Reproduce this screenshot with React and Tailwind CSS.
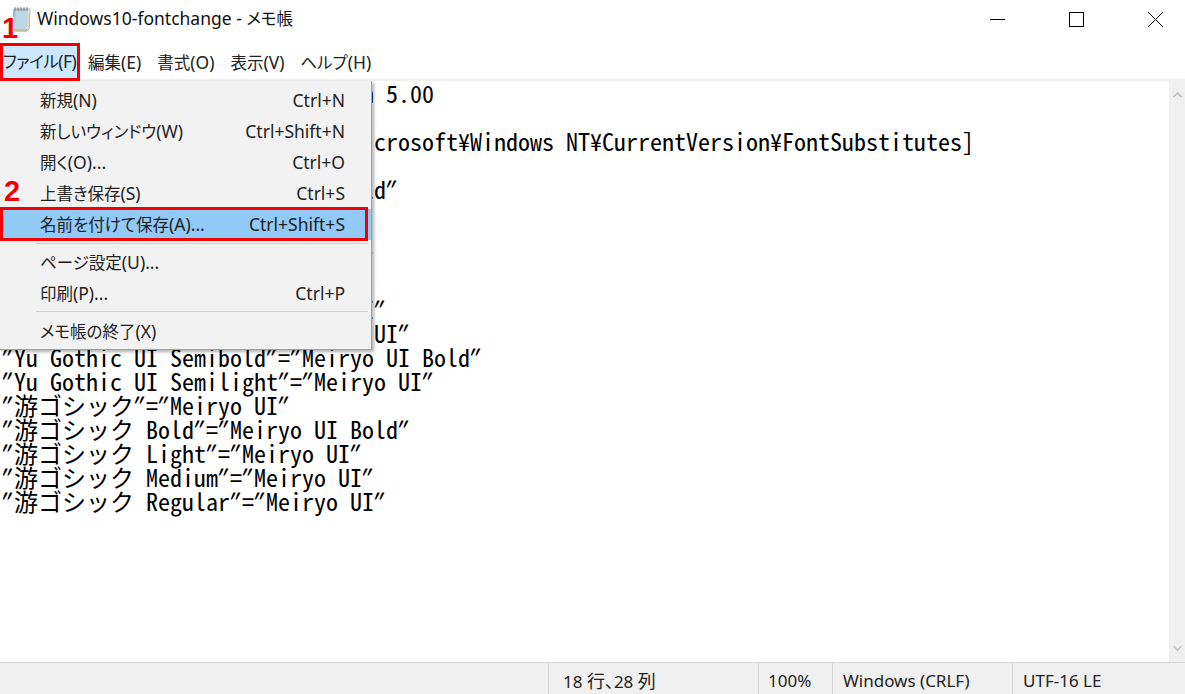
import React from 'react'

const UI_FONT = "font-['Noto_Sans','Noto_Sans_CJK_JP',sans-serif]"

const LINES = [
  'Windows Registry Editor Version 5.00',
  '',
  '[HKEY_LOCAL_MACHINE¥SOFTWARE¥Microsoft¥Windows NT¥CurrentVersion¥FontSubstitutes]',
  '',
  '"Yu Gothic Bold"="Meiryo UI Bold"',
  '"Yu Gothic Light"="Meiryo UI"',
  '"Yu Gothic Medium"="Meiryo UI"',
  '"Yu Gothic Regular"="Meiryo UI"',
  '"Yu Gothic UI"="Meiryo UI"',
  '"Yu Gothic UI Light"="Meiryo UI"',
  '"Yu Gothic UI Regular"="Meiryo UI"',
  '"Yu Gothic UI Semibold"="Meiryo UI Bold"',
  '"Yu Gothic UI Semilight"="Meiryo UI"',
  '"游ゴシック"="Meiryo UI"',
  '"游ゴシック Bold"="Meiryo UI Bold"',
  '"游ゴシック Light"="Meiryo UI"',
  '"游ゴシック Medium"="Meiryo UI"',
  '"游ゴシック Regular"="Meiryo UI"',
]

function Mixed({ text, status }) {
  const runs = text.match(/[\u3000-\u9fff]+|[^\u3000-\u9fff]+/g)
  const latin = status ? 'text-[17px]' : 'text-[17.5px]'
  const cjk = status ? "text-[18px] [font-feature-settings:'palt']" : "text-[16.5px] [font-feature-settings:'palt']"
  return (
    <span className="whitespace-pre">
      {runs.map((r, i) => (
        <span key={i} className={/[\u3000-\u9fff]/.test(r) ? cjk : latin}>{r}</span>
      ))}
    </span>
  )
}

// MS Gothic draws the straight quote slanted
function EditorLine({ text }) {
  const parts = text.split('"')
  return (
    <div className="h-[24px]">
      {parts.map((p, i) => (
        <React.Fragment key={i}>
          {i > 0 && <span className="inline-block -translate-x-[3px] -skew-x-[25deg]">"</span>}
          {p}
        </React.Fragment>
      ))}
    </div>
  )
}

function NotepadIcon() {
  return (
    <svg width="22" height="26" viewBox="0 0 22 26" className="shrink-0">
      <path d="M4 3h16l-1 20-2 2H3z" fill="#a6cbdc" stroke="#7f9aa6" strokeWidth="1" />
      <path d="M6 5h12l-1 18H5z" fill="#bcd8e4" />
      <path d="M18 3h2l-1 20-2 2z" fill="#e6dcc4" />
      <path d="M3 25h14l2-2H4z" fill="#cdbc98" />
      <path d="M5 1v4M8 1v4M11 1v4M14 1v4M17 1v4" stroke="#8a8a8a" strokeWidth="1" />
    </svg>
  )
}

function MenuItem({ label, shortcut, active }) {
  return (
    <div className={`flex h-[31px] items-center justify-between pb-[1px] pl-[40px] pr-[26px] text-[#222] ${active ? 'bg-[#91c9f7]' : ''}`}>
      <Mixed text={label} />
      {shortcut && <Mixed text={shortcut} />}
    </div>
  )
}

function FileMenu() {
  return (
    <div className="absolute left-0 top-[81px] z-10 w-[372px] border-b border-r border-[#a0a0a0] bg-[#f2f2f2] pb-[2px] pt-[4px] shadow-[2px_2px_3px_rgba(0,0,0,0.3)]">
      <MenuItem label="新規(N)" shortcut="Ctrl+N" />
      <MenuItem label="新しいウィンドウ(W)" shortcut="Ctrl+Shift+N" />
      <MenuItem label="開く(O)..." shortcut="Ctrl+O" />
      <MenuItem label="上書き保存(S)" shortcut="Ctrl+S" />
      <MenuItem label="名前を付けて保存(A)..." shortcut="Ctrl+Shift+S" active />
      <div className="mb-[3px] ml-[36px] mr-[3px] mt-[3px] h-px bg-[#d0d0d0]" />
      <MenuItem label="ページ設定(U)..." />
      <MenuItem label="印刷(P)..." shortcut="Ctrl+P" />
      <div className="mb-[4px] ml-[36px] mr-[3px] mt-[2px] h-px bg-[#d0d0d0]" />
      <MenuItem label="メモ帳の終了(X)" />
    </div>
  )
}

function StatusCell({ className, text }) {
  return (
    <div className={`flex h-full items-center border-l border-[#d7d7d7] pt-[5px] ${className}`}>
      <Mixed text={text} status />
    </div>
  )
}

export default function App() {
  return (
    <div className={`relative flex h-[694px] w-[1185px] flex-col overflow-hidden bg-white text-black ${UI_FONT}`}>
      {/* title bar */}
      <div className="flex h-[41px] items-center pb-[4px] pl-[10px]">
        <NotepadIcon />
        <span className="ml-[5px] text-[#111]"><Mixed text="Windows10-fontchange - メモ帳" /></span>
        <div className="ml-auto flex items-center">
          <svg width="16" height="16" viewBox="0 0 16 16" className="mr-[63px]">
            <path d="M1 8.5h15" stroke="#000" strokeWidth="1" />
          </svg>
          <svg width="16" height="16" viewBox="0 0 16 16" className="mr-[63px]">
            <rect x="1.5" y="1.5" width="14" height="14" fill="none" stroke="#000" strokeWidth="1" />
          </svg>
          <svg width="16" height="16" viewBox="0 0 16 16" className="mr-[22px]">
            <path d="M1 1l15 15M16 1L1 16" stroke="#000" strokeWidth="1" />
          </svg>
        </div>
      </div>

      {/* menu bar */}
      <div className="flex h-[40px] items-start border-b-2 border-[#f0f0f0] pt-[2px] text-[#222]">
        <div className="flex h-[36px] w-[80px] items-center bg-[#cce8ff] pl-[3px] tracking-[-0.5px]"><Mixed text="ファイル(F)" /></div>
        <div className="ml-[8px] flex h-[36px] items-center gap-[16px] pt-[2px]">
          <Mixed text="編集(E)" />
          <Mixed text="書式(O)" />
          <Mixed text="表示(V)" />
          <Mixed text="ヘルプ(H)" />
        </div>
      </div>

      {/* editor */}
      <div className="flex min-h-0 flex-1">
        <div className="flex-1 overflow-hidden whitespace-pre pl-[2px] font-['Noto_Sans_CJK_JP',monospace] text-[24px] leading-[24px] text-black [font-feature-settings:'hwid']">
          {LINES.map((l, i) => (
            <EditorLine key={i} text={l} />
          ))}
        </div>
        <div className="flex w-[16px] flex-col items-center justify-between bg-[#f0f0f0] py-[11px]">
          <svg width="9" height="6" viewBox="0 0 9 6"><path d="M0.5 5L4.5 1l4 4" fill="none" stroke="#c0b8b4" strokeWidth="1.5" /></svg>
          <svg width="9" height="6" viewBox="0 0 9 6"><path d="M0.5 1l4 4 4-4" fill="none" stroke="#c0c0c0" strokeWidth="1.5" /></svg>
        </div>
      </div>

      {/* status bar */}
      <div className="flex h-[32px] items-center border-t border-[#d7d7d7] bg-[#f0f0f0] text-[#222]">
        <div className="h-full w-[548px]" />
        <StatusCell className="w-[210px] pl-[14px]" text="18 行、28 列" />
        <StatusCell className="w-[74px] pl-[9px]" text="100%" />
        <StatusCell className="w-[180px] pl-[10px]" text="Windows (CRLF)" />
        <StatusCell className="flex-1 pl-[10px]" text="UTF-16 LE" />
      </div>

      <FileMenu />

      {/* annotations */}
      <div className="absolute left-0 top-[43px] z-20 h-[38px] w-[80px] border-[3px] border-[#f00000]" />
      <div className="absolute left-0 top-[207px] z-20 h-[34px] w-[368px] border-[3px] border-[#f00000]" />
      <div className="absolute left-[2px] top-[12px] z-20 font-['Liberation_Sans',sans-serif] text-[29px] font-bold leading-[32px] text-[#f00000] [text-shadow:1px_1px_0_#fff,-1px_-1px_0_#fff,1px_-1px_0_#fff,-1px_1px_0_#fff]">1</div>
      <div className="absolute left-[4px] top-[175px] z-20 font-['Liberation_Sans',sans-serif] text-[29px] font-bold leading-[32px] text-[#f00000] [text-shadow:1px_1px_0_#fff,-1px_-1px_0_#fff,1px_-1px_0_#fff,-1px_1px_0_#fff]">2</div>
    </div>
  )
}
